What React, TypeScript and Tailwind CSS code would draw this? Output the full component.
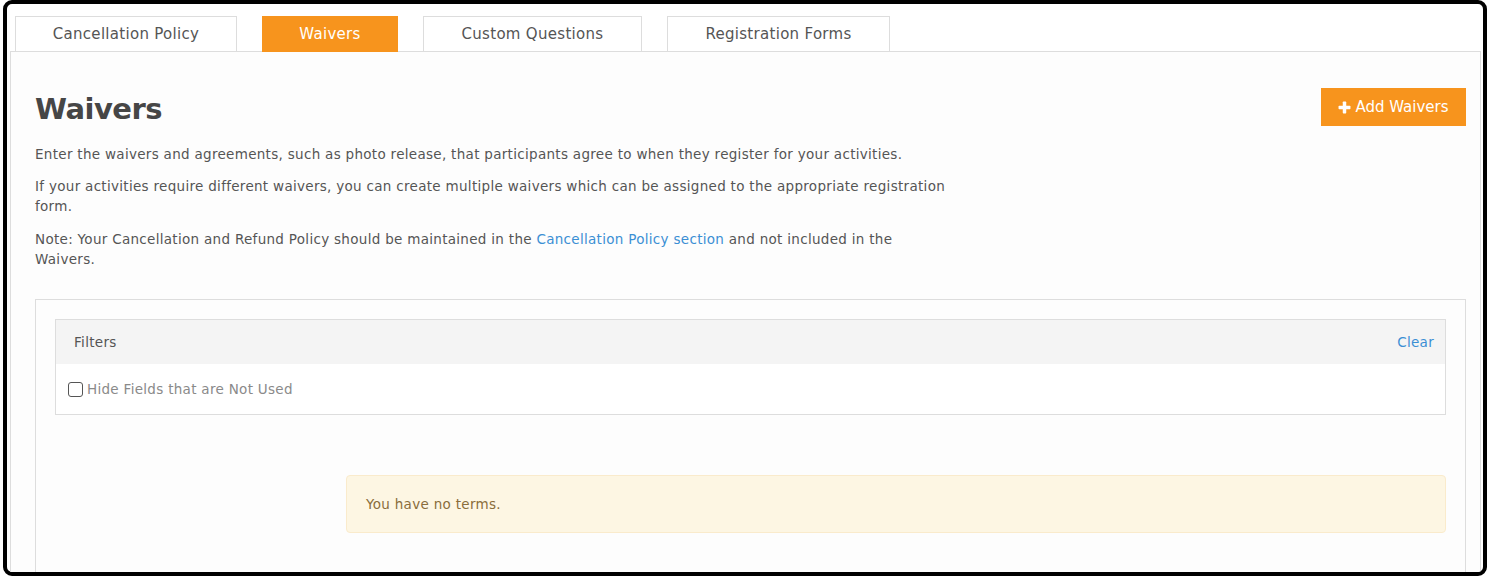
import React from "react";

const font = { fontFamily: '"DejaVu Sans", "Noto Sans", sans-serif' };

function Tab({ label, active, w }: { label: string; active?: boolean; w: string }) {
  return (
    <div
      className={
        "h-[36px] -mb-px flex items-center justify-center text-[15px] tracking-[0.3px] border " +
        w +
        (active
          ? " bg-[#f7941d] border-[#f7941d] text-white"
          : " bg-white border-[#dddddd] text-[#555555]")
      }
    >
      {label}
    </div>
  );
}

export default function App() {
  return (
    <div className="w-[1488px] h-[577px] bg-white overflow-hidden" style={font}>
      <div className="ml-[3px] w-[1484px] h-[576px] border-[4px] border-black rounded-[9px] overflow-hidden bg-white flex flex-col">
        <div className="flex pt-[12px] pl-[8px] gap-[25px] relative z-10">
          <Tab label="Cancellation Policy" w="w-[222px]" />
          <Tab label="Waivers" active w="w-[136px]" />
          <Tab label="Custom Questions" w="w-[219px]" />
          <Tab label="Registration Forms" w="w-[223px]" />
        </div>
        <div className="ml-[3px] mr-[2px] flex-1 border border-b-0 border-[#dddddd] bg-[#fdfdfd] pl-[24px] pr-[14px]">
          <div className="flex items-start justify-between pt-[36px]">
            <h1 className="text-[29px] font-bold tracking-[-0.5px] text-[#464646] leading-[38px] mt-[2px]">Waivers</h1>
            <button className="w-[145px] h-[38px] bg-[#f7941d] text-white text-[15px] flex items-center justify-center gap-[4px]">
              <svg width="13" height="13" viewBox="0 0 12 12" fill="white">
                <rect x="4.4" y="0.5" width="3.2" height="11" rx="0.6" />
                <rect x="0.5" y="4.4" width="11" height="3.2" rx="0.6" />
              </svg>
              Add Waivers
            </button>
          </div>
          <div className="max-w-[915px] text-[13.5px] tracking-[0.3px] leading-[20px] text-[#555555] mt-[16px]">
            <p className="mb-[12px]">
              Enter the waivers and agreements, such as photo release, that participants agree to when they register for your activities.
            </p>
            <p className="mb-[13px]">
              If your activities require different waivers, you can create multiple waivers which can be assigned to the appropriate registration form.
            </p>
            <p>
              Note: Your Cancellation and Refund Policy should be maintained in the{" "}
              <span className="text-[#3b8fd4]">Cancellation Policy section</span> and not included in the Waivers.
            </p>
          </div>
          <div className="mt-[30px] border border-b-0 border-[#dddddd] bg-[#fdfdfd] px-[19px] pt-[19px] h-[400px]">
            <div className="border border-[#dddddd] bg-white">
              <div className="h-[44px] bg-[#f4f4f4] flex items-center justify-between pl-[18px] pr-[11px]">
                <span className="text-[13.5px] tracking-[0.3px] text-[#555555]">Filters</span>
                <span className="text-[13.5px] tracking-[0.3px] text-[#3b8fd4]">Clear</span>
              </div>
              <div className="h-[50px] flex items-center pl-[12px]">
                <span className="w-[15px] h-[15px] border border-[#555555] rounded-[3px] bg-white inline-block" />
                <span className="ml-[4px] text-[13.5px] tracking-[0.3px] text-[#8a8a8a]">Hide Fields that are Not Used</span>
              </div>
            </div>
            <div className="flex mt-[60px]">
              <div className="w-[291px] shrink-0" />
              <div className="flex-1 h-[58px] rounded-[4px] bg-[#fdf6e3] border border-[#faebcc] flex items-center pl-[19px] text-[13.5px] tracking-[0.3px] text-[#8a6d3b]">
                You have no terms.
              </div>
            </div>
          </div>
        </div>
      </div>
    </div>
  );
}
